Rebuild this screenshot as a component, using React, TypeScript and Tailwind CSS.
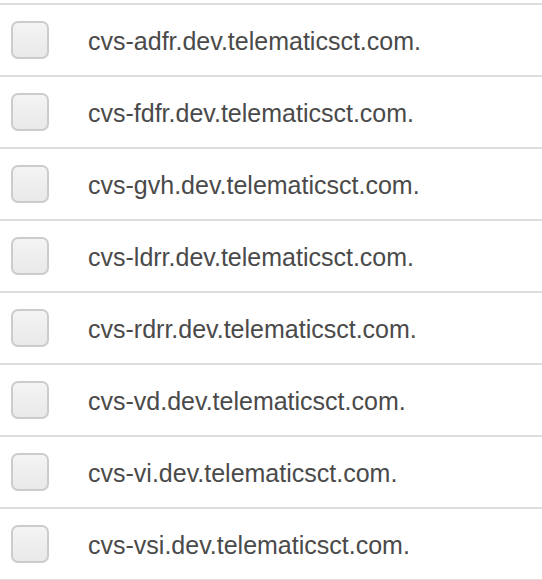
const hosts = [
  "cvs-adfr.dev.telematicsct.com.",
  "cvs-fdfr.dev.telematicsct.com.",
  "cvs-gvh.dev.telematicsct.com.",
  "cvs-ldrr.dev.telematicsct.com.",
  "cvs-rdrr.dev.telematicsct.com.",
  "cvs-vd.dev.telematicsct.com.",
  "cvs-vi.dev.telematicsct.com.",
  "cvs-vsi.dev.telematicsct.com.",
];

export default function App() {
  return (
    <div className="min-h-[580px] bg-white pt-[3px] font-['Liberation_Sans',Arial,sans-serif]">
      <ul className="border-b-2 border-[#dddddd]">
        {hosts.map((host) => (
          <li key={host} className="flex h-[72px] items-center border-t-2 border-[#dddddd]">
            <label className="flex w-full cursor-pointer items-center">
              <span className="ml-[11px] h-[38px] w-[38px] shrink-0 rounded-[7px] border-2 border-[#cccccc] bg-gradient-to-b from-[#f4f4f4] to-[#e9e9e9]" />
              <span className="ml-[39px] mt-[2px] text-[25px] leading-none text-[#4a4a4a]">{host}</span>
            </label>
          </li>
        ))}
      </ul>
    </div>
  );
}
